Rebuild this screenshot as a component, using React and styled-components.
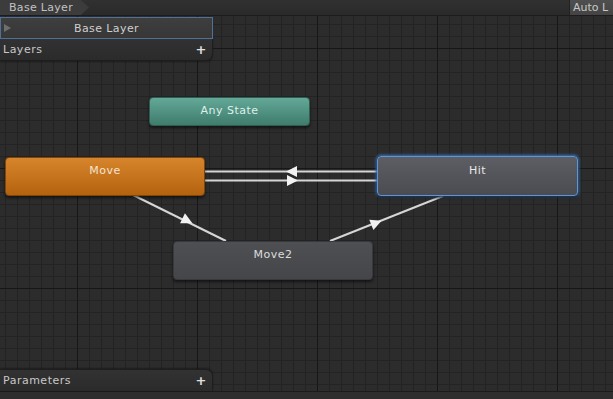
import React from "react";
import styled, { createGlobalStyle } from "styled-components";

const Global = createGlobalStyle`
  html, body { margin: 0; padding: 0; background: #2b2b2b; }
  body { font-family: "DejaVu Sans", "Liberation Sans", sans-serif; }
  #root { width: 613px; height: 399px; }
`;

const Window = styled.div`
  width: 613px;
  height: 399px;
  display: flex;
  flex-direction: column;
  overflow: hidden;
  background: #2b2b2b;
  font-size: 11px;
  color: #c4c4c4;
`;

const TopBar = styled.div`
  height: 15px;
  flex-shrink: 0;
  display: flex;
  align-items: stretch;
  background: linear-gradient(#313131, #2a2a2a);
  border-bottom: 1px solid #1c1c1c;
`;

const Crumb = styled.div`
  position: relative;
  display: flex;
  align-items: center;
  padding: 0 16px 0 9px;
  background: #3c3c3c;
  color: #c2c2c2;
  letter-spacing: 0.3px;
  clip-path: polygon(0 0, calc(100% - 8px) 0, 100% 50%, calc(100% - 8px) 100%, 0 100%);
`;

const Spacer = styled.div`
  flex: 1;
`;

const AutoButton = styled.div`
  width: 40px;
  flex-shrink: 0;
  display: flex;
  align-items: center;
  padding-left: 3px;
  overflow: hidden;
  background: linear-gradient(#4f4f4f, #444);
  border-left: 1px solid #222;
  color: #c8c8c8;
  white-space: nowrap;
`;

const Graph = styled.div`
  position: relative;
  flex: 1;
  display: flex;
  flex-direction: column;
  justify-content: space-between;
  background-color: #2c2c2c;
  background-image:
    linear-gradient(to right, #171717 1px, transparent 1px),
    linear-gradient(to bottom, #171717 1px, transparent 1px),
    linear-gradient(to right, #232323 1px, transparent 1px),
    linear-gradient(to bottom, #232323 1px, transparent 1px);
  background-size: 120px 120px, 120px 120px, 12px 12px, 12px 12px;
  background-position: 77px 32px, 77px 32px, 5px 8px, 5px 8px;
`;

const Panel = styled.div`
  position: relative;
  z-index: 2;
  width: 213px;
  display: flex;
  flex-direction: column;
  margin-top: ${(p) => (p.$top ? "1px" : "0")};
`;

const LayerItem = styled.div`
  position: relative;
  height: 20px;
  display: flex;
  align-items: center;
  justify-content: center;
  background: linear-gradient(#3e3e3e, #373737);
  border: 1px solid #50709c;
  color: #cfcfcf;
  letter-spacing: 0.4px;
`;

const Caret = styled.span`
  position: absolute;
  left: 3px;
  top: 6px;
  width: 0;
  height: 0;
  border-top: 4px solid transparent;
  border-bottom: 4px solid transparent;
  border-left: 7px solid #6e6e6e;
`;

const Header = styled.div`
  height: 21px;
  display: flex;
  align-items: center;
  justify-content: space-between;
  padding: 0 5px 0 3px;
  background: linear-gradient(#323232, #2b2b2b);
  color: #c8c8c8;
  border-right: 1px solid #1e1e1e;
  border-${(p) => (p.$bottom ? "top" : "bottom")}: 1px solid #1e1e1e;
  border-${(p) => (p.$bottom ? "top-right" : "bottom-right")}-radius: 7px;
  box-shadow: 0 ${(p) => (p.$bottom ? "-1px" : "1px")} 2px rgba(0, 0, 0, 0.35);
  letter-spacing: 0.5px;
`;

const Plus = styled.span`
  font-weight: bold;
  font-size: 13px;
  color: #e0e0e0;
  line-height: 1;
`;

const BottomStrip = styled.div`
  height: 7px;
  flex-shrink: 0;
  background: #2e2e2e;
  border-top: 1px solid #1b1b1b;
`;

const Wires = styled.svg`
  position: absolute;
  left: 0;
  top: 0;
  width: 613px;
  height: 377px;
  z-index: 0;
`;

const skins = {
  any: {
    bg: "linear-gradient(#63a898, #3f7c6c)",
    border: "#2f5d51",
    color: "#def0ea",
    glow: "none",
  },
  orange: {
    bg: "linear-gradient(#d7852c, #b5620f)",
    border: "#80450a",
    color: "#f3e4d2",
    glow: "none",
  },
  gray: {
    bg: "linear-gradient(#4e4f53, #45464a)",
    border: "#38393c",
    color: "#dcdcdc",
    glow: "none",
  },
  selected: {
    bg: "linear-gradient(#5c5e63, #4a4c51)",
    border: "#5f95d6",
    color: "#e8e8e8",
    glow: "0 0 3px 1px #3d79c2",
  },
};

const Node = styled.div`
  position: absolute;
  z-index: 1;
  box-sizing: border-box;
  display: flex;
  justify-content: center;
  padding-top: ${(p) => p.$pad}px;
  background: ${(p) => skins[p.$skin].bg};
  border: 1px solid ${(p) => skins[p.$skin].border};
  border-radius: 4px;
  color: ${(p) => skins[p.$skin].color};
  box-shadow: 0 2px 3px rgba(0, 0, 0, 0.55)${(p) =>
      skins[p.$skin].glow !== "none" ? ", " + skins[p.$skin].glow : ""};
  letter-spacing: 0.5px;
`;

const nodes = [
  { label: "Any State", x: 149, y: 81, w: 161, h: 29, skin: "any", pad: 6 },
  { label: "Move", x: 5, y: 141, w: 200, h: 39, skin: "orange", pad: 6 },
  { label: "Hit", x: 377, y: 140, w: 201, h: 40, skin: "selected", pad: 7 },
  { label: "Move2", x: 173, y: 225, w: 200, h: 39, skin: "gray", pad: 6 },
];

function Arrow({ cx, cy, angle }) {
  return (
    <polygon
      points="6,0 -5,-5.5 -5,5.5"
      fill="#f2f2f2"
      transform={`translate(${cx} ${cy}) rotate(${angle})`}
    />
  );
}

const lineColor = "#d6d6d6";

export default function App() {
  return (
    <>
      <Global />
      <Window>
        <TopBar>
          <Crumb>Base Layer</Crumb>
          <Spacer />
          <AutoButton>Auto L</AutoButton>
        </TopBar>
        <Graph>
          <Wires viewBox="0 0 613 377">
            <line x1="205" y1="155.5" x2="377" y2="155.5" stroke={lineColor} strokeWidth="2" />
            <line x1="205" y1="164.5" x2="377" y2="164.5" stroke={lineColor} strokeWidth="2" />
            <Arrow cx={292} cy={155.5} angle={180} />
            <Arrow cx={292} cy={164.5} angle={0} />
            <line x1="133" y1="179" x2="226" y2="225" stroke={lineColor} strokeWidth="2" />
            <Arrow cx={187} cy={204.5} angle={26.3} />
            <line x1="330" y1="225" x2="443" y2="180" stroke={lineColor} strokeWidth="2" />
            <Arrow cx={376} cy={207} angle={-21.7} />
          </Wires>
          {nodes.map((n) => (
            <Node
              key={n.label}
              $skin={n.skin}
              $pad={n.pad}
              style={{ left: n.x, top: n.y, width: n.w, height: n.h }}
            >
              {n.label}
            </Node>
          ))}
          <Panel $top>
            <LayerItem>
              <Caret />
              Base Layer
            </LayerItem>
            <Header>
              <span>Layers</span>
              <Plus>+</Plus>
            </Header>
          </Panel>
          <Panel>
            <Header $bottom>
              <span>Parameters</span>
              <Plus>+</Plus>
            </Header>
          </Panel>
        </Graph>
        <BottomStrip />
      </Window>
    </>
  );
}
